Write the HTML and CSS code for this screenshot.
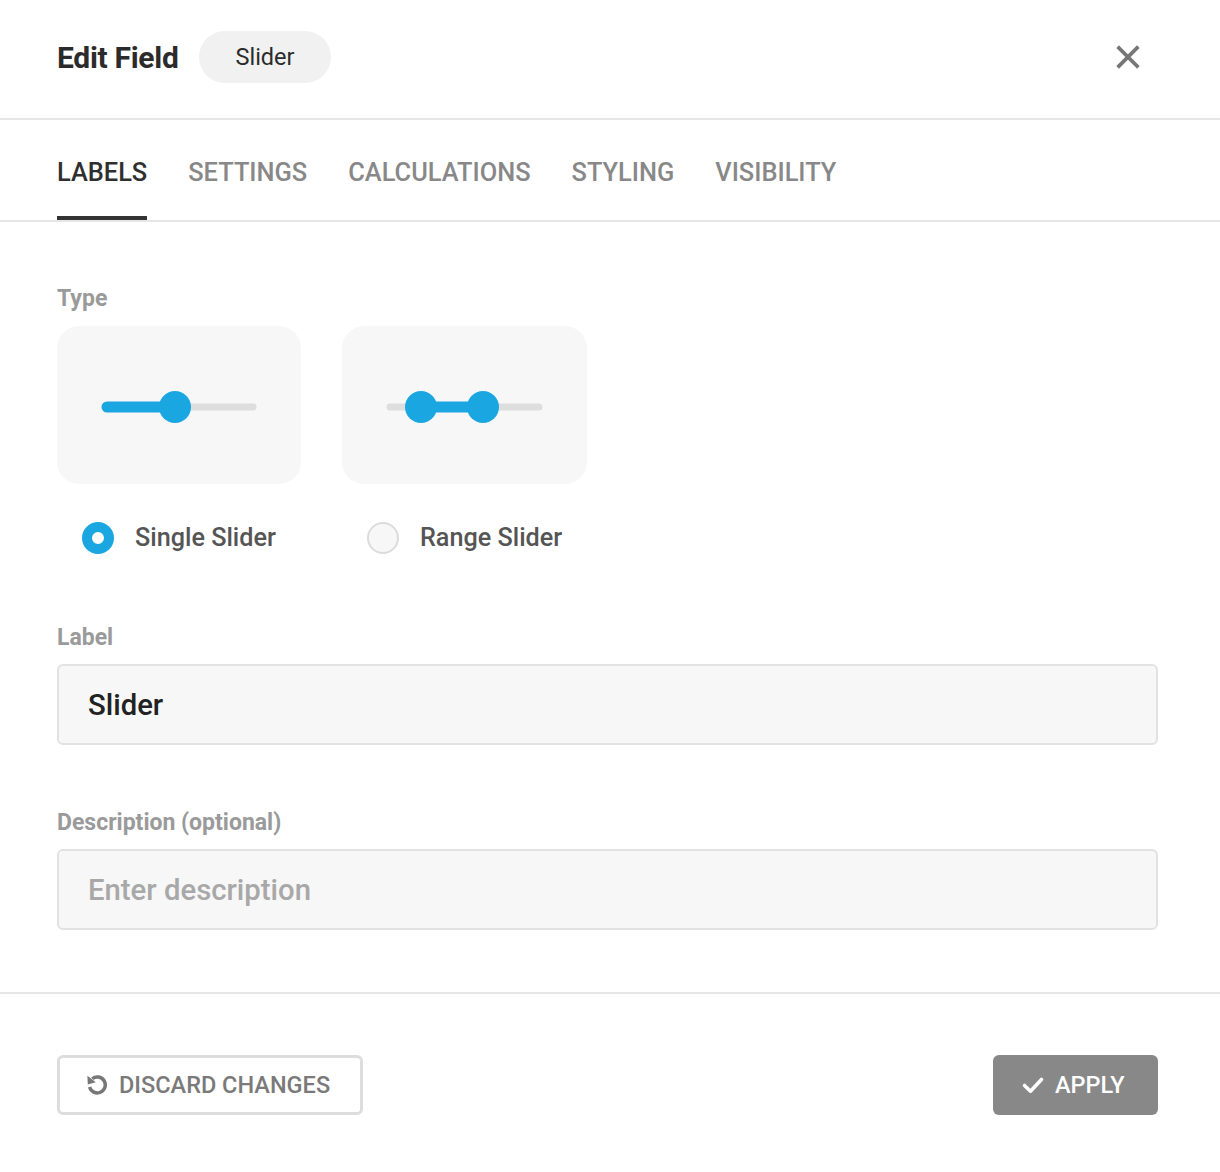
FILE: index.html
```html
<!DOCTYPE html>
<html>
<head>
<meta charset="utf-8">
<link rel="stylesheet" href="styles.css">
</head>
<body>
<div class="modal">
  <header class="header">
    <div class="title-group">
      <h1 class="title">Edit Field</h1>
      <span class="badge">Slider</span>
    </div>
    <button class="close" aria-label="Close">
      <svg width="24" height="24" viewBox="0 0 24 24"><path d="M3 3 L21 21 M21 3 L3 21" stroke="#777" stroke-width="3.8" stroke-linecap="square" fill="none"/></svg>
    </button>
  </header>
  <nav class="tabs">
    <div class="tab active">LABELS</div>
    <div class="tab">SETTINGS</div>
    <div class="tab">CALCULATIONS</div>
    <div class="tab">STYLING</div>
    <div class="tab">VISIBILITY</div>
  </nav>
  <main class="content">
    <div class="field-label">Type</div>
    <div class="types">
      <div class="type">
        <div class="card">
          <svg width="244" height="158" viewBox="0 0 244 158">
            <line x1="48" y1="81" x2="196" y2="81" stroke="#dedede" stroke-width="7" stroke-linecap="round"/>
            <line x1="50" y1="81" x2="118" y2="81" stroke="#1aa6e1" stroke-width="11" stroke-linecap="round"/>
            <circle cx="118" cy="81" r="16" fill="#1aa6e1"/>
          </svg>
        </div>
        <label class="radio-row"><span class="radio checked"></span><span class="radio-text">Single Slider</span></label>
      </div>
      <div class="type">
        <div class="card">
          <svg width="245" height="158" viewBox="0 0 245 158">
            <line x1="48" y1="81" x2="197" y2="81" stroke="#dedede" stroke-width="7" stroke-linecap="round"/>
            <line x1="79" y1="81" x2="141" y2="81" stroke="#1aa6e1" stroke-width="11"/>
            <circle cx="79" cy="81" r="16" fill="#1aa6e1"/>
            <circle cx="141" cy="81" r="16" fill="#1aa6e1"/>
          </svg>
        </div>
        <label class="radio-row"><span class="radio"></span><span class="radio-text">Range Slider</span></label>
      </div>
    </div>

    <div class="field-label gap-top">Label</div>
    <div class="input"><span class="value">Slider</span></div>

    <div class="field-label gap-top2">Description (optional)</div>
    <div class="input"><span class="placeholder">Enter description</span></div>
  </main>
  <footer class="footer">
    <button class="btn btn-outline">
      <svg width="24" height="24" viewBox="0 0 24 24"><path d="M4.6 14 A8 8 0 1 0 7.2 5.8" stroke="#777" stroke-width="3.4" fill="none"/><path d="M2.4 2.8 L2.8 11.4 L10.8 9.2 Z" fill="#777"/></svg>
      <span>DISCARD CHANGES</span>
    </button>
    <button class="btn btn-solid">
      <svg width="24" height="24" viewBox="0 0 24 24"><path d="M3.5 12.5 L9.5 18.2 L20.5 6.5" stroke="#fff" stroke-width="3.6" fill="none" stroke-linecap="round" stroke-linejoin="round"/></svg>
      <span>APPLY</span>
    </button>
  </footer>
</div>
</body>
</html>
```
FILE: styles.css
```css
* { box-sizing: border-box; }
html, body { margin: 0; padding: 0; background: #fff; }
body { font-family: Roboto, "Noto Sans", Arial, sans-serif; color: #333; }

.modal { width: 1220px; min-height: 1172px; display: flex; flex-direction: column; }

.header {
  height: 120px;
  padding: 0 80px 4px 57px;
  display: flex;
  align-items: center;
  justify-content: space-between;
  border-bottom: 2px solid #e6e6e6;
}
.title-group { display: flex; align-items: center; gap: 21px; }
.title { margin: 0; font-size: 30px; font-weight: 700; color: #2b2b2b; letter-spacing: -0.3px; }
.badge {
  background: #f1f1f1;
  border-radius: 26px;
  height: 52px;
  padding: 0 36px;
  display: flex; align-items: center;
  font-size: 23.5px; font-weight: 400; color: #2b2b2b;
}
.close { border: 0; background: none; padding: 0; width: 24px; height: 24px; display: flex; }

.tabs {
  height: 102px;
  padding: 0 57px;
  display: flex;
  gap: 41px;
  border-bottom: 2px solid #e6e6e6;
}
.tab {
  height: 100px;
  display: flex; align-items: center;
  font-size: 25.4px; font-weight: 500; color: #888;
  padding-top: 7px;
  border-bottom: 4px solid transparent;
}
.tab.active { color: #2f2f2f; border-bottom-color: #333; }

.content { padding: 62px 62px 62px 57px; border-bottom: 2px solid #e6e6e6; }
.field-label { font-size: 23px; font-weight: 700; color: #9a9a9a; line-height: 30px; }
.types + .field-label { margin-top: 69px; }
.gap-top { margin-top: 69px; }
.gap-top2 { margin-top: 63px; }

.types { display: flex; gap: 41px; margin-top: 12px; }
.type { display: flex; flex-direction: column; }
.card { width: 244px; height: 158px; background: #f7f7f7; border-radius: 22px; }
.card svg { display: block; }
.type:nth-child(2) .card { width: 245px; }
.radio-row { display: flex; align-items: center; gap: 21px; margin-top: 38px; padding-left: 25px; }
.radio {
  width: 32px; height: 32px; border-radius: 50%;
  border: 2px solid #dcdcdc; background: #f7f7f7;
}
.radio.checked { border: 10px solid #1aa6e1; background: #fff; }
.radio-text { font-size: 25.2px; font-weight: 500; color: #555; line-height: 32px; }

.input {
  margin-top: 11px;
  height: 81px;
  background: #f7f7f7;
  border: 2px solid #e2e2e2;
  border-radius: 6px;
  padding: 0 29px;
  display: flex; align-items: center;
  font-size: 29.3px;
}
.value { color: #222; font-weight: 500; }
.placeholder { color: #a8a8a8; font-weight: 500; }

.footer {
  padding: 61px 62px 57px 57px;
  display: flex; justify-content: space-between; align-items: center;
}
.btn {
  height: 60px;
  border-radius: 6px;
  display: flex; align-items: center; gap: 10px;
  font-family: Roboto, Arial, sans-serif;
  font-size: 23.5px; font-weight: 500;
}
.btn-outline { background: #fff; border: 3px solid #dddddd; color: #7a7a7a; padding: 0 26px 0 25px; width: 306px; }
.btn-solid { background: #888; border: 0; color: #fff; padding: 0 30px 0 28px; width: 165px; }
```
